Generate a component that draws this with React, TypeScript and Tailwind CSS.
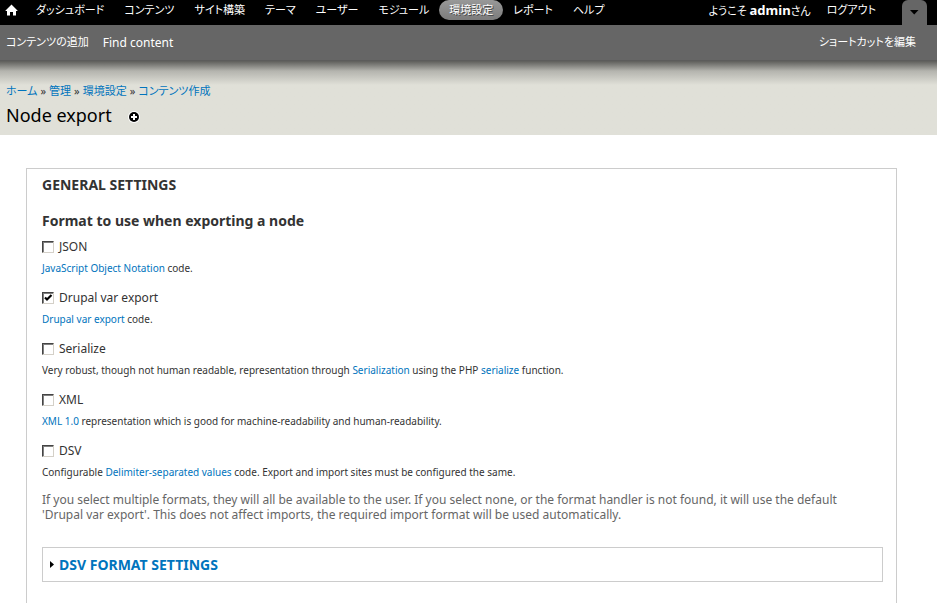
import { useState, type ReactNode } from "react";

const menu = [
  "ダッシュボード",
  "コンテンツ",
  "サイト構築",
  "テーマ",
  "ユーザー",
  "モジュール",
  "環境設定",
  "レポート",
  "ヘルプ",
];

const trail = ["ホーム", "管理", "環境設定", "コンテンツ作成"];

function A({ children }: { children: ReactNode }) {
  return (
    <a href="#" className="text-[#0074bd] hover:underline">
      {children}
    </a>
  );
}

const formats = [
  {
    id: "json",
    label: "JSON",
    description: (
      <>
        <A>JavaScript Object Notation</A> code.
      </>
    ),
  },
  {
    id: "drupal",
    label: "Drupal var export",
    checked: true,
    description: (
      <>
        <A>Drupal var export</A> code.
      </>
    ),
  },
  {
    id: "serialize",
    label: "Serialize",
    description: (
      <>
        Very robust, though not human readable, representation through{" "}
        <A>Serialization</A> using the PHP <A>serialize</A> function.
      </>
    ),
  },
  {
    id: "xml",
    label: "XML",
    description: (
      <>
        <A>XML 1.0</A> representation which is good for machine-readability and
        human-readability.
      </>
    ),
  },
  {
    id: "dsv",
    label: "DSV",
    description: (
      <>
        Configurable <A>Delimiter-separated values</A> code. Export and import
        sites must be configured the same.
      </>
    ),
  },
];

function Toolbar() {
  return (
    <header className="text-[11px] text-white [font-feature-settings:'palt']">
      <div className="flex h-[25px] items-start justify-between bg-black">
        <nav className="flex items-center whitespace-nowrap">
          <a href="#" aria-label="Home" className="mr-2 ml-[5px] flex h-5 items-center">
            <svg width="13" height="12" viewBox="0 0 13 12" fill="#fff" aria-hidden="true">
              <path d="M6.5 0.5 0.5 6.5V7H2V11.5H5V8H8V11.5H11V7H12.5V6.5Z" />
            </svg>
          </a>
          <ul className="flex">
            {menu.map((item) => (
              <li key={item}>
                <a
                  href="#"
                  className={
                    item === "環境設定"
                      ? "block h-5 rounded-full bg-linear-to-b from-[#989898] to-[#7c7c7c] px-[10px] leading-5 [text-shadow:1px_1px_0_#444]"
                      : "block h-5 px-[10px] leading-5"
                  }
                >
                  {item}
                </a>
              </li>
            ))}
          </ul>
        </nav>
        <div className="flex whitespace-nowrap">
          <span className="leading-5">
            ようこそ <strong className="text-[13px] leading-5">admin</strong>さん
          </span>
          <a href="#" className="ml-4 leading-5">
            ログアウト
          </a>
          <button
            type="button"
            aria-label="Toggle shortcuts"
            className="mr-[10px] ml-[26px] flex h-[25px] w-[25px] items-center justify-center rounded-t-md bg-[#666]"
          >
            <svg width="9" height="5" viewBox="0 0 9 5" aria-hidden="true">
              <path d="M0 0H8.5L4.25 4.5Z" />
            </svg>
          </button>
        </div>
      </div>
      <div className="flex h-9 items-center justify-between border-b border-[#5c5c5b] bg-[#666] pr-[21px] pl-[6px]">
        <div className="flex items-center gap-3.5">
          <a href="#">コンテンツの追加</a>
          <a href="#" className="text-xs">
            Find content
          </a>
        </div>
        <a href="#">ショートカットを編集</a>
      </div>
    </header>
  );
}

function PageTitle() {
  return (
    <div className="bg-[#e0e0d8] bg-linear-to-b from-[#5e5e5b] via-[#b4b4ae] via-[10px] to-[#e0e0d8] to-[24px] px-[6px] pt-5 pb-[6px]">
      <nav
        aria-label="Breadcrumb"
        className="flex gap-[3px] text-[11px] leading-5 [font-feature-settings:'palt']"
      >
        {trail.map((item, i) => (
          <span key={item}>
            {i > 0 && <span className="mr-[3px] text-[#333]">»</span>}
            <A>{item}</A>
          </span>
        ))}
      </nav>
      <div className="flex items-center gap-4">
        <h1 className="text-lg leading-7 text-black">Node export</h1>
        <a href="#" aria-label="Add to shortcuts" className="mt-1">
          <svg width="12" height="12" viewBox="0 0 12 12" aria-hidden="true">
            <circle cx="6" cy="6" r="6" fill="#fff" />
            <circle cx="6" cy="6" r="5" />
            <path d="M6 3V9M3 6H9" stroke="#fff" strokeWidth="2" />
          </svg>
        </a>
      </div>
    </div>
  );
}

export default function App() {
  const [open, setOpen] = useState(false);

  return (
    <div className="min-h-screen bg-white font-['Noto_Sans','Noto_Sans_CJK_JP',sans-serif] text-[#333]">
      <Toolbar />
      <PageTitle />
      <main className="pt-[33px] pr-10 pl-[26px]">
        <fieldset className="border border-[#ccc] pt-[6px] pr-[13px] pb-10 pl-[15px]">
          <legend className="float-left w-full text-sm leading-5 font-bold uppercase">
            General settings
          </legend>
          <div role="group" aria-labelledby="format-title" className="clear-both pt-4">
            <h2 id="format-title" className="mb-[6px] text-sm leading-5 font-bold">
              Format to use when exporting a node
            </h2>
            {formats.map((format) => (
              <div key={format.id} className="mb-3">
                <div className="flex h-5 items-center gap-[5px]">
                  <input
                    type="checkbox"
                    id={format.id}
                    defaultChecked={format.checked}
                    className="size-3 appearance-none border border-t-[#444] border-r-[#d4d0c8] border-b-[#d4d0c8] border-l-[#444] bg-white shadow-[inset_1px_1px_0_#808080] checked:bg-[url('data:image/svg+xml,%3Csvg%20xmlns=%22http://www.w3.org/2000/svg%22%20viewBox=%220%200%2010%2010%22%3E%3Cpath%20d=%22M2%204.5L4%206.5L8.5%202%22%20fill=%22none%22%20stroke=%22black%22%20stroke-width=%222.2%22/%3E%3C/svg%3E')]"
                  />
                  <label htmlFor={format.id} className="text-xs leading-5">
                    {format.label}
                  </label>
                </div>
                <p className="mt-[3px] text-[10px] leading-4">{format.description}</p>
              </div>
            ))}
            <p className="pr-4 text-xs leading-[15px] text-[#666]">
              If you select multiple formats, they will all be available to the user. If you select
              none, or the format handler is not found, it will use the default 'Drupal var export'.
              This does not affect imports, the required import format will be used automatically.
            </p>
          </div>
          <section className="mt-[25px] border border-[#ccc] px-[7px]">
            <button
              type="button"
              aria-expanded={open}
              onClick={() => setOpen(!open)}
              className="flex h-[33px] items-center gap-[5px] text-sm font-bold text-[#0074bd] uppercase"
            >
              <svg width="4" height="7" viewBox="0 0 4 7" fill="#000" aria-hidden="true">
                <path d="M0 0L4 3.5L0 7Z" />
              </svg>
              DSV format settings
            </button>
          </section>
        </fieldset>
      </main>
    </div>
  );
}
